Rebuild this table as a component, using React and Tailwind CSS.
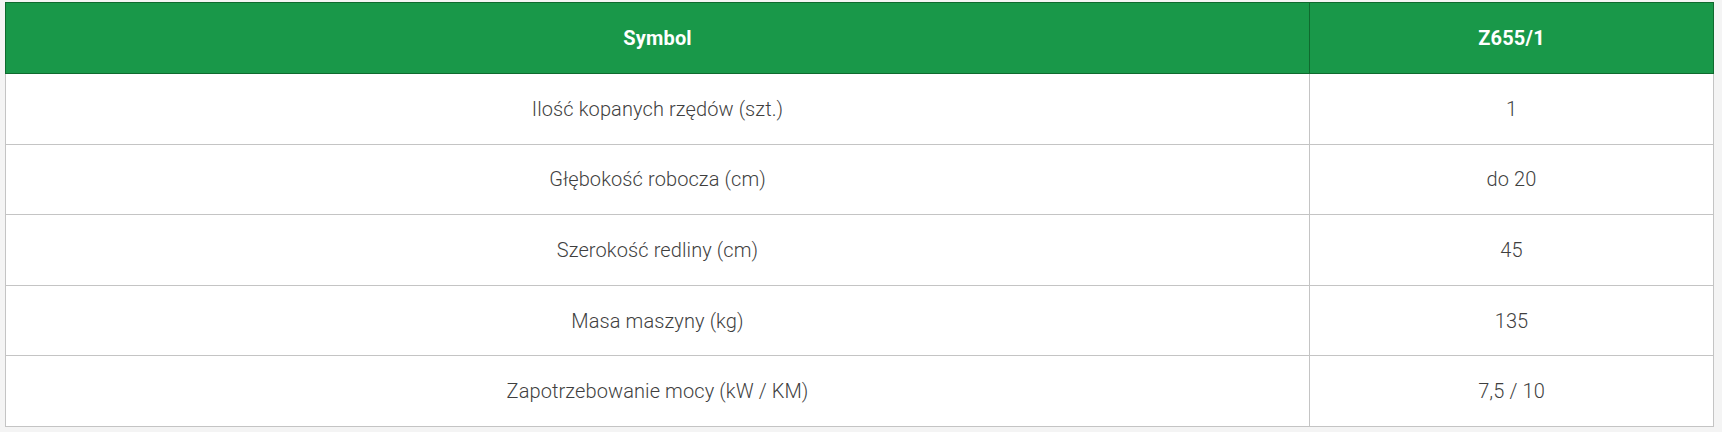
import React from "react";

const rows = [
  ["Ilość kopanych rzędów (szt.)", "1"],
  ["Głębokość robocza (cm)", "do 20"],
  ["Szerokość redliny (cm)", "45"],
  ["Masa maszyny (kg)", "135"],
  ["Zapotrzebowanie mocy (kW / KM)", "7,5 / 10"],
];

export default function App() {
  return (
    <div className="w-[1722px] h-[432px] bg-[#f4f4f4] pl-[5px] pr-[8px] pt-[2px] overflow-hidden">
      <table
        className="w-full border-collapse bg-white table-fixed"
        style={{ fontFamily: "Roboto, 'Liberation Sans', sans-serif" }}
      >
        <colgroup>
          <col className="w-[1304px]" />
          <col />
        </colgroup>
        <thead>
          <tr className="h-[71px] bg-[#199849]">
            <th className="border border-[#0f6a2e] text-white font-bold text-[20px] tracking-[0.2px] text-center align-middle">
              Symbol
            </th>
            <th className="border border-[#0f6a2e] text-white font-bold text-[20px] tracking-[0.2px] text-center align-middle">
              Z655/1
            </th>
          </tr>
        </thead>
        <tbody>
          {rows.map(([a, b]) => (
            <tr key={a} className="h-[70.6px]">
              <td className="border border-[#c4c4c4] text-center align-middle font-light text-[20px] tracking-[0.1px] text-[#3f3f3f]">
                {a}
              </td>
              <td className="border border-[#c4c4c4] text-center align-middle font-light text-[20px] tracking-[0.1px] text-[#3f3f3f]">
                {b}
              </td>
            </tr>
          ))}
        </tbody>
      </table>
    </div>
  );
}
